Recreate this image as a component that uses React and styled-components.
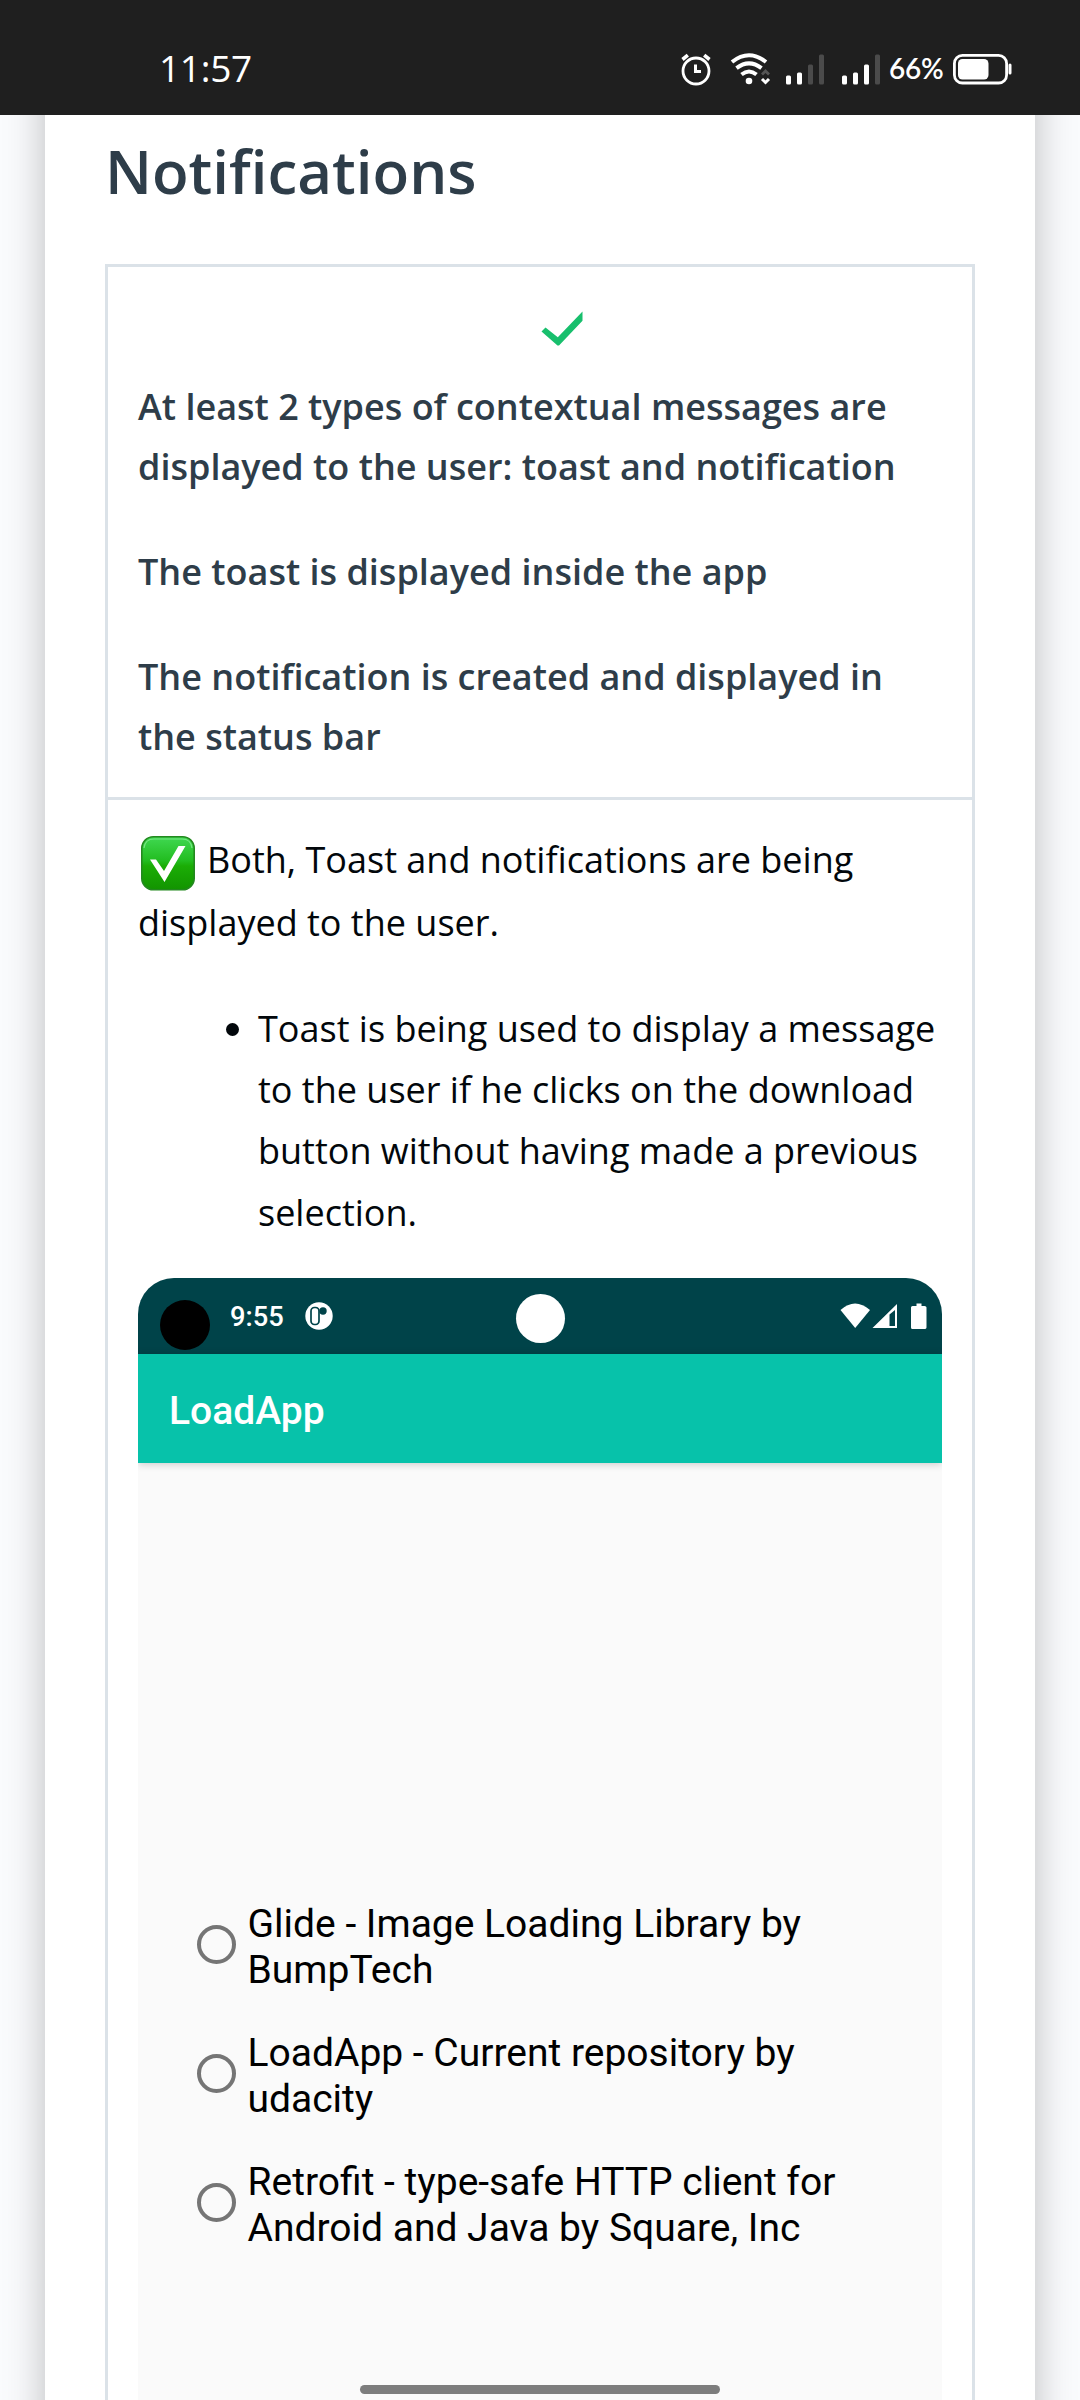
import React from 'react';
import styled, { createGlobalStyle } from 'styled-components';

const Global = createGlobalStyle`
  *{box-sizing:border-box}
  html,body{margin:0;padding:0;background:#fafbfd}
  body{width:1080px;height:2400px;overflow:hidden;font-family:"Open Sans","Noto Sans",sans-serif}
  svg{display:block;flex:none}
  p,h1,ul{margin:0;padding:0}
`;

const Screen = styled.div`
  position: relative;
  width: 1080px;
  height: 2400px;
  overflow: hidden;
  display: flex;
  flex-direction: column;
  background: #fafbfd;
`;

const StatusBar = styled.header`
  position: relative;
  z-index: 1;
  flex: none;
  height: 115px;
  padding: 23px 68px 0 159px;
  display: flex;
  align-items: center;
  justify-content: space-between;
  background: #1f1f1f;
  color: #fff;
`;

const Clock = styled.span`
  padding-bottom: 2px;
  font: 400 37px/44px "Open Sans", sans-serif;
  letter-spacing: -0.3px;
`;

const StatusIcons = styled.div`
  display: flex;
  align-items: center;
`;

const Percent = styled.span`
  width: 55px;
  margin: 0 9px;
  padding-bottom: 2px;
  font: 600 28px/40px Lato, sans-serif;
  letter-spacing: -0.3px;
  white-space: nowrap;
`;

const Card = styled.main`
  flex: 1;
  width: 990px;
  margin: -60px auto 0;
  padding: 60px 60px 0;
  background: #fff;
  box-shadow: 0 0 38px rgba(0, 0, 0, 0.25);
`;

const Title = styled.h1`
  height: 149px;
  padding-top: 14px;
  font-size: 60px;
  font-weight: 600;
  line-height: 84px;
  color: #2e3d49;
`;

const Table = styled.section`
  height: 2200px;
  border: 3px solid #dbe2e8;
`;

const Criteria = styled.div`
  height: 533px;
  padding: 0 30px;
  border-bottom: 3px solid #dbe2e8;
`;

const CheckRow = styled.div`
  display: flex;
  justify-content: center;
  height: 110px;
  padding: 43.5px 0 0 43px;
`;

const Criterion = styled.p`
  margin-bottom: 45px;
  font-size: 36px;
  font-weight: 600;
  line-height: 60px;
  color: #2e3d49;
`;

const Review = styled.div`
  padding: 29px 30px 0;
  color: #02070b;
  font-size: 36px;
  line-height: 61.2px;
`;

const Summary = styled.p`
  height: 125px;
`;

const FirstLine = styled.span`
  display: flex;
  height: 63px;
  gap: 12px;
  padding-left: 3px;
`;

const EmojiSlot = styled.span`
  padding-top: 7px;
`;

const List = styled.ul`
  margin-top: 44px;
  list-style: none;
`;

const Item = styled.li`
  display: flex;
  padding-left: 88px;
  height: 280px;
`;

const Dot = styled.span`
  flex: none;
  width: 13px;
  height: 13px;
  margin: 25px 19px 0 0;
  border-radius: 50%;
  background: #02070b;
`;

const Phone = styled.div`
  height: 1200px;
  border-radius: 36px 36px 0 0;
  overflow: hidden;
  background: #fafafa;
  font-family: Roboto, sans-serif;
`;

const PhoneStatus = styled.div`
  height: 76px;
  display: flex;
  align-items: flex-start;
  background: #004349;
  color: #fff;
`;

const Disc = styled.span`
  flex: none;
  width: ${(p) => p.$size}px;
  height: ${(p) => p.$size}px;
  margin: ${(p) => p.$margin};
  border-radius: 50%;
  background: ${(p) => p.$color};
`;

const PhoneTime = styled.span`
  width: 75px;
  padding-top: 23px;
  font-size: 27.3px;
  font-weight: 500;
  line-height: 33px;
`;

const IconSlot = styled.span`
  padding-top: ${(p) => p.$top || 0}px;
  margin-left: ${(p) => p.$left || 0}px;
`;

const AppBar = styled.div`
  height: 109px;
  padding: 4px 31px 0;
  display: flex;
  align-items: center;
  background: #07c2aa;
  color: #fff;
  font-size: 39px;
  font-weight: 500;
  line-height: 46px;
  box-shadow: 0 1px 8px rgba(0, 0, 0, 0.2);
`;

const Options = styled.div`
  padding: 438px 0 0 58.5px;
  display: flex;
  flex-direction: column;
  gap: 37px;
`;

const Option = styled.div`
  display: flex;
  align-items: center;
  gap: 12px;
  height: 92px;
  color: #000;
  font-size: 39px;
  line-height: 46px;
`;

const Radio = styled.span`
  flex: none;
  width: 39px;
  height: 39px;
  margin-bottom: 5px;
  border: 4px solid #757575;
  border-radius: 50%;
`;

const HomeBar = styled.div`
  position: absolute;
  left: 360px;
  bottom: 6px;
  width: 360px;
  height: 9px;
  border-radius: 5px;
  background: #7d7d7d;
`;

const AlarmIcon = () => (
  <svg width="30" height="33" viewBox="0 0 30 33" fill="none" stroke="#fff">
    <circle cx="15" cy="18" r="13" strokeWidth="2.8" />
    <path d="M1.5 6.5 6.8 2.2M28.5 6.5 23.2 2.2" strokeWidth="3.6" />
    <path d="M14.5 11.5V18.5H20" strokeWidth="3" />
  </svg>
);

const WifiIcon = () => (
  <svg width="41" height="33" viewBox="0 0 41 33" fill="none" stroke="#fff">
    <path d="M2 9Q19 -4.5 36 9" strokeWidth="4" />
    <path d="M6.5 15.2Q19 5.5 31.5 15.2" strokeWidth="4" />
    <path d="M11.5 21.5Q19 15.5 26.5 21.5" strokeWidth="4" />
    <circle cx="19" cy="28" r="3.3" fill="#fff" stroke="none" />
    <path d="M32 21.5 35.5 18 39 21.5" stroke="#555" strokeWidth="2.8" />
    <path d="M32 26 35.5 29.5 39 26" strokeWidth="3" />
  </svg>
);

const SignalIcon = ({ level }) => (
  <svg width="38" height="31" viewBox="0 0 38 31">
    {[[0, 9], [11, 12], [22, 20], [33, 30]].map(([x, h], i) => (
      <rect key={x} x={x} y={30.5 - h} width="5" height={h} rx="1.5" fill={i < level ? '#fff' : '#4b4b4b'} />
    ))}
  </svg>
);

const BatteryIcon = () => (
  <svg width="59" height="31" viewBox="0 0 59 31">
    <rect x="1.4" y="1.4" width="52.2" height="27.6" rx="8" fill="none" stroke="#fff" strokeWidth="2.8" />
    <rect x="5" y="5" width="30.5" height="20.5" rx="4.5" fill="#fff" />
    <rect x="55.5" y="9.5" width="3" height="11" rx="1.5" fill="#fff" />
  </svg>
);

const GreenCheck = () => (
  <svg width="42" height="35" viewBox="0 0 42 36" preserveAspectRatio="none">
    <path d="M41.5 0.5V10L18 35.5H16.5L0.5 21 4.5 17 16.8 27Z" fill="#18bf6d" />
  </svg>
);

const CheckEmoji = () => (
  <svg width="54" height="55" viewBox="0 0 54 55">
    <defs>
      <linearGradient id="body" x1="0" y1="0" x2="0" y2="1">
        <stop offset="0" stopColor="#40d852" />
        <stop offset="0.45" stopColor="#22bd20" />
        <stop offset="0.55" stopColor="#1bad06" />
        <stop offset="1" stopColor="#129400" />
      </linearGradient>
    </defs>
    <rect x="0.8" y="0.8" width="52.4" height="53" rx="11.5" fill="url(#body)" stroke="#23891f" strokeWidth="1.6" />
    <path d="M3 12Q4 3 13 3H41Q50 3 51 12" fill="none" stroke="#76e583" strokeWidth="1.2" />
    <path d="M9 23.5H15L23 35 37.5 10H44.5L23.5 46Z" fill="#fff" />
  </svg>
);

const AppBadge = () => (
  <svg width="28" height="28" viewBox="0 0 28 28">
    <circle cx="14" cy="14" r="13.7" fill="#fff" />
    <rect x="6" y="5.5" width="8" height="17" rx="3.4" fill="none" stroke="#004349" strokeWidth="1.7" />
    <circle cx="18" cy="9" r="3.7" fill="#004349" />
  </svg>
);

const PhoneStatusIcons = () => (
  <svg width="87" height="27" viewBox="0 0 87 27" fill="#fff">
    <path d="M0.5 7Q15 -6 30 7L15.2 25Z" />
    <path fillRule="evenodd" d="M57 1V25H32.500ZM49.500 11.500V23H55V7Z" />
    <path d="M76.500 0.500H81.500V3H84.500Q86.500 3 86.500 4.500V24.500Q86.500 26 84.500 26H72.500Q71 26 71 24.500V4.500Q71 3 72.500 3H76.500Z" />
  </svg>
);

const options = [
  ['Glide - Image Loading Library by', 'BumpTech'],
  ['LoadApp - Current repository by', 'udacity'],
  ['Retrofit - type-safe HTTP client for', 'Android and Java by Square, Inc'],
];

export default function App() {
  return (
    <Screen>
      <Global />
      <StatusBar>
        <Clock>11:57</Clock>
        <StatusIcons>
          <AlarmIcon />
          <IconSlot $left={19}><WifiIcon /></IconSlot>
          <IconSlot $left={15}><SignalIcon level={2} /></IconSlot>
          <IconSlot $left={18}><SignalIcon level={3} /></IconSlot>
          <Percent>66%</Percent>
          <BatteryIcon />
        </StatusIcons>
      </StatusBar>
      <Card>
        <Title>Notifications</Title>
        <Table>
          <Criteria>
            <CheckRow><GreenCheck /></CheckRow>
            <Criterion>At least 2 types of contextual messages are<br />displayed to the user: toast and notification</Criterion>
            <Criterion>The toast is displayed inside the app</Criterion>
            <Criterion>The notification is created and displayed in<br />the status bar</Criterion>
          </Criteria>
          <Review>
            <Summary>
              <FirstLine><EmojiSlot><CheckEmoji /></EmojiSlot>Both, Toast and notifications are being</FirstLine>
              displayed to the user.
            </Summary>
            <List>
              <Item>
                <Dot />
                <span>Toast is being used to display a message<br />to the user if he clicks on the download<br />button without having made a previous<br />selection.</span>
              </Item>
            </List>
            <Phone>
              <PhoneStatus>
                <Disc $size={50} $margin="22px 20px 0 22px" $color="#000" />
                <PhoneTime>9:55</PhoneTime>
                <IconSlot $top={24}><AppBadge /></IconSlot>
                <Disc $size={49} $margin="16px 0 0 183px" $color="#fff" />
                <IconSlot $top={25} $left={275}><PhoneStatusIcons /></IconSlot>
              </PhoneStatus>
              <AppBar>LoadApp</AppBar>
              <Options>
                {options.map(([a, b]) => (
                  <Option key={a}>
                    <Radio />
                    <span>{a}<br />{b}</span>
                  </Option>
                ))}
              </Options>
            </Phone>
          </Review>
        </Table>
      </Card>
      <HomeBar />
    </Screen>
  );
}
